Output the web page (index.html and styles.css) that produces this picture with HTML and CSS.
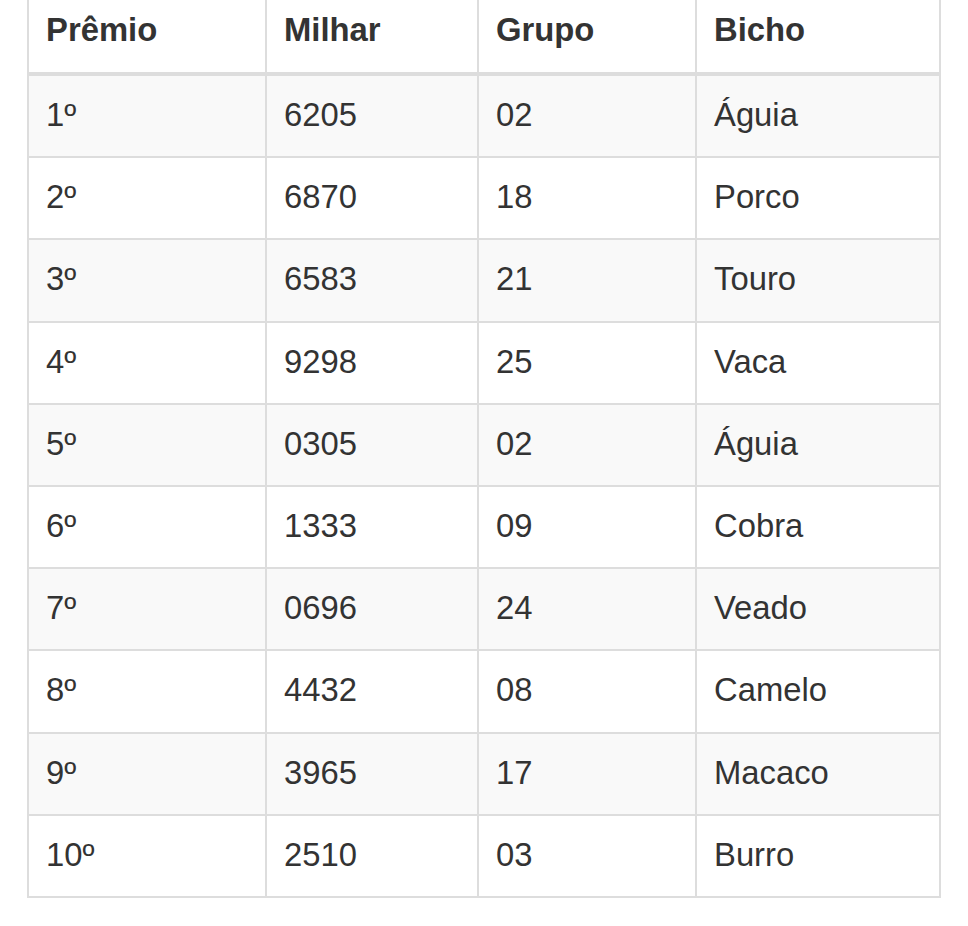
FILE: index.html
```html
<!DOCTYPE html>
<html lang="pt">
<head>
<meta charset="utf-8">
<title>Resultado</title>
<link rel="stylesheet" href="styles.css">
</head>
<body>
<table class="results">
  <thead>
    <tr>
      <th class="c1">Prêmio</th>
      <th class="c2">Milhar</th>
      <th class="c3">Grupo</th>
      <th class="c4">Bicho</th>
    </tr>
  </thead>
  <tbody>
    <tr><td>1º</td><td>6205</td><td>02</td><td>Águia</td></tr>
    <tr><td>2º</td><td>6870</td><td>18</td><td>Porco</td></tr>
    <tr><td>3º</td><td>6583</td><td>21</td><td>Touro</td></tr>
    <tr><td>4º</td><td>9298</td><td>25</td><td>Vaca</td></tr>
    <tr><td>5º</td><td>0305</td><td>02</td><td>Águia</td></tr>
    <tr><td>6º</td><td>1333</td><td>09</td><td>Cobra</td></tr>
    <tr><td>7º</td><td>0696</td><td>24</td><td>Veado</td></tr>
    <tr><td>8º</td><td>4432</td><td>08</td><td>Camelo</td></tr>
    <tr><td>9º</td><td>3965</td><td>17</td><td>Macaco</td></tr>
    <tr><td>10º</td><td>2510</td><td>03</td><td>Burro</td></tr>
  </tbody>
</table>
</body>
</html>
```

FILE: styles.css
```css
html, body {
  margin: 0;
  padding: 0;
  background: #ffffff;
}

body {
  font-family: "Liberation Sans", Arial, sans-serif;
  font-size: 32.8px;
  color: #333333;
}

.results {
  margin: -10.2px 0 0 27px;
  width: 914px;
  table-layout: fixed;
  border-collapse: separate;
  border-spacing: 0;
  border-left: 2px solid #dddddd;
  border-top: 2px solid #dddddd;
  box-sizing: border-box;
}

.results th,
.results td {
  box-sizing: border-box;
  padding: 17px 15px 19px 17px;
  line-height: 44.2px;
  text-align: left;
  vertical-align: middle;
  border-right: 2px solid #dddddd;
  border-bottom: 2px solid #dddddd;
  white-space: nowrap;
}

.results th {
  font-weight: bold;
  padding-top: 16px;
  padding-bottom: 20px;
  border-bottom-width: 4px;
}

.results .c1 { width: 238px; }
.results .c2 { width: 212px; }
.results .c3 { width: 218px; }
.results .c4 { width: 244px; }

.results tbody tr:nth-child(odd) td {
  background: #f9f9f9;
}
```
